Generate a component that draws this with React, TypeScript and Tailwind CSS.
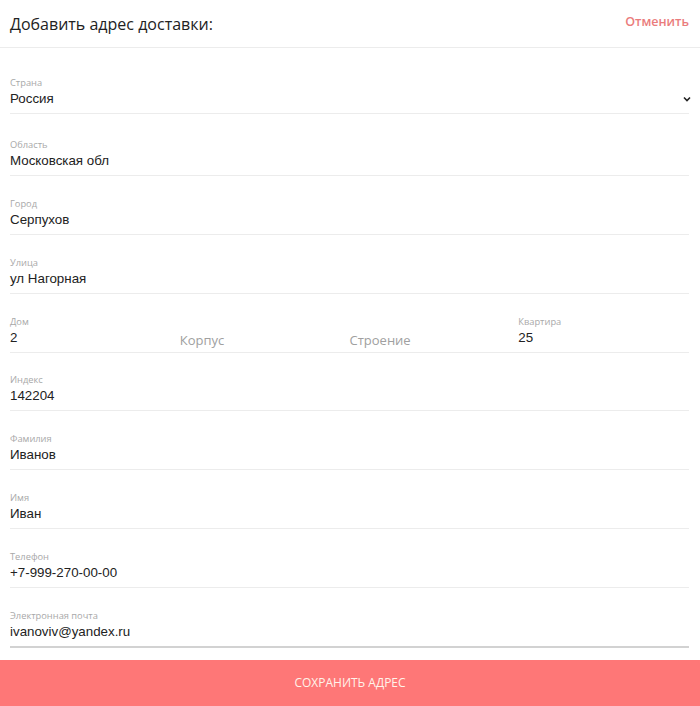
import React from "react";

const labelCls = "mb-[1px] text-[9.3px] leading-[12px] text-[#a8a8a8] font-['Open_Sans','Noto_Sans',sans-serif]";
const valueCls = "text-[13.33px] leading-[18px] text-[#222] font-['Liberation_Sans',Arial,sans-serif]";

function Field({ label, value, mt, last }: { label: string; value: string; mt: string; last?: boolean }) {
  return (
    <div className={`${mt} ${last ? "border-b-2 border-[#d2d2d2]" : "border-b border-[#ececec]"} pb-[5px]`}>
      <div className={labelCls}>{label}</div>
      <div className={valueCls}>{value}</div>
    </div>
  );
}

export default function App() {
  return (
    <div className="w-[700px] h-[706px] bg-white flex flex-col overflow-hidden font-['Open_Sans','Noto_Sans',sans-serif]">
      <div className="h-[48px] border-b border-[#ececec] flex items-start justify-between pl-[10px] pr-[11px]">
        <div className="mt-[12px] text-[16px] leading-[24px] font-medium text-[#222]">
          Добавить адрес доставки:
        </div>
        <div className="mt-[12px] text-[12.5px] leading-[20px] font-semibold text-[#ea7c7c]">
          Отменить
        </div>
      </div>
      <div className="pl-[10px] pr-[11px] flex flex-col">
        <div className="mt-[29px] border-b border-[#ececec] pb-[5px] flex items-end justify-between">
          <div>
            <div className={labelCls}>Страна</div>
            <div className={valueCls}>Россия</div>
          </div>
          <svg width="10" height="8" viewBox="0 0 10 8" className="mb-[5px] mr-[-3px]">
            <path d="M2 2.5 L5 5.5 L8 2.5" fill="none" stroke="#222" strokeWidth="1.6" />
          </svg>
        </div>
        <Field label="Область" value="Московская обл" mt="mt-[25px]" />
        <Field label="Город" value="Серпухов" mt="mt-[22px]" />
        <Field label="Улица" value="ул Нагорная" mt="mt-[22px]" />
        <div className="mt-[22px] border-b border-[#ececec] pb-[5px] grid grid-cols-4">
          <div>
            <div className={labelCls}>Дом</div>
            <div className={valueCls}>2</div>
          </div>
          <div className="flex items-end">
            <div className="text-[13px] leading-[18px] text-[#a0a0a0] translate-y-[2px]">Корпус</div>
          </div>
          <div className="flex items-end">
            <div className="text-[13px] leading-[18px] text-[#a0a0a0] translate-y-[2px]">Строение</div>
          </div>
          <div className="-ml-[1px]">
            <div className={labelCls}>Квартира</div>
            <div className={valueCls}>25</div>
          </div>
        </div>
        <Field label="Индекс" value="142204" mt="mt-[21px]" />
        <Field label="Фамилия" value="Иванов" mt="mt-[22px]" />
        <Field label="Имя" value="Иван" mt="mt-[22px]" />
        <Field label="Телефон" value="+7-999-270-00-00" mt="mt-[22px]" />
        <Field label="Электронная почта" value="ivanoviv@yandex.ru" mt="mt-[22px]" last />
      </div>
      <div className="mt-[12px] h-[46px] bg-[#fe7777] flex items-center justify-center text-[12px] text-[#fff3ea]">
        СОХРАНИТЬ АДРЕС
      </div>
    </div>
  );
}
